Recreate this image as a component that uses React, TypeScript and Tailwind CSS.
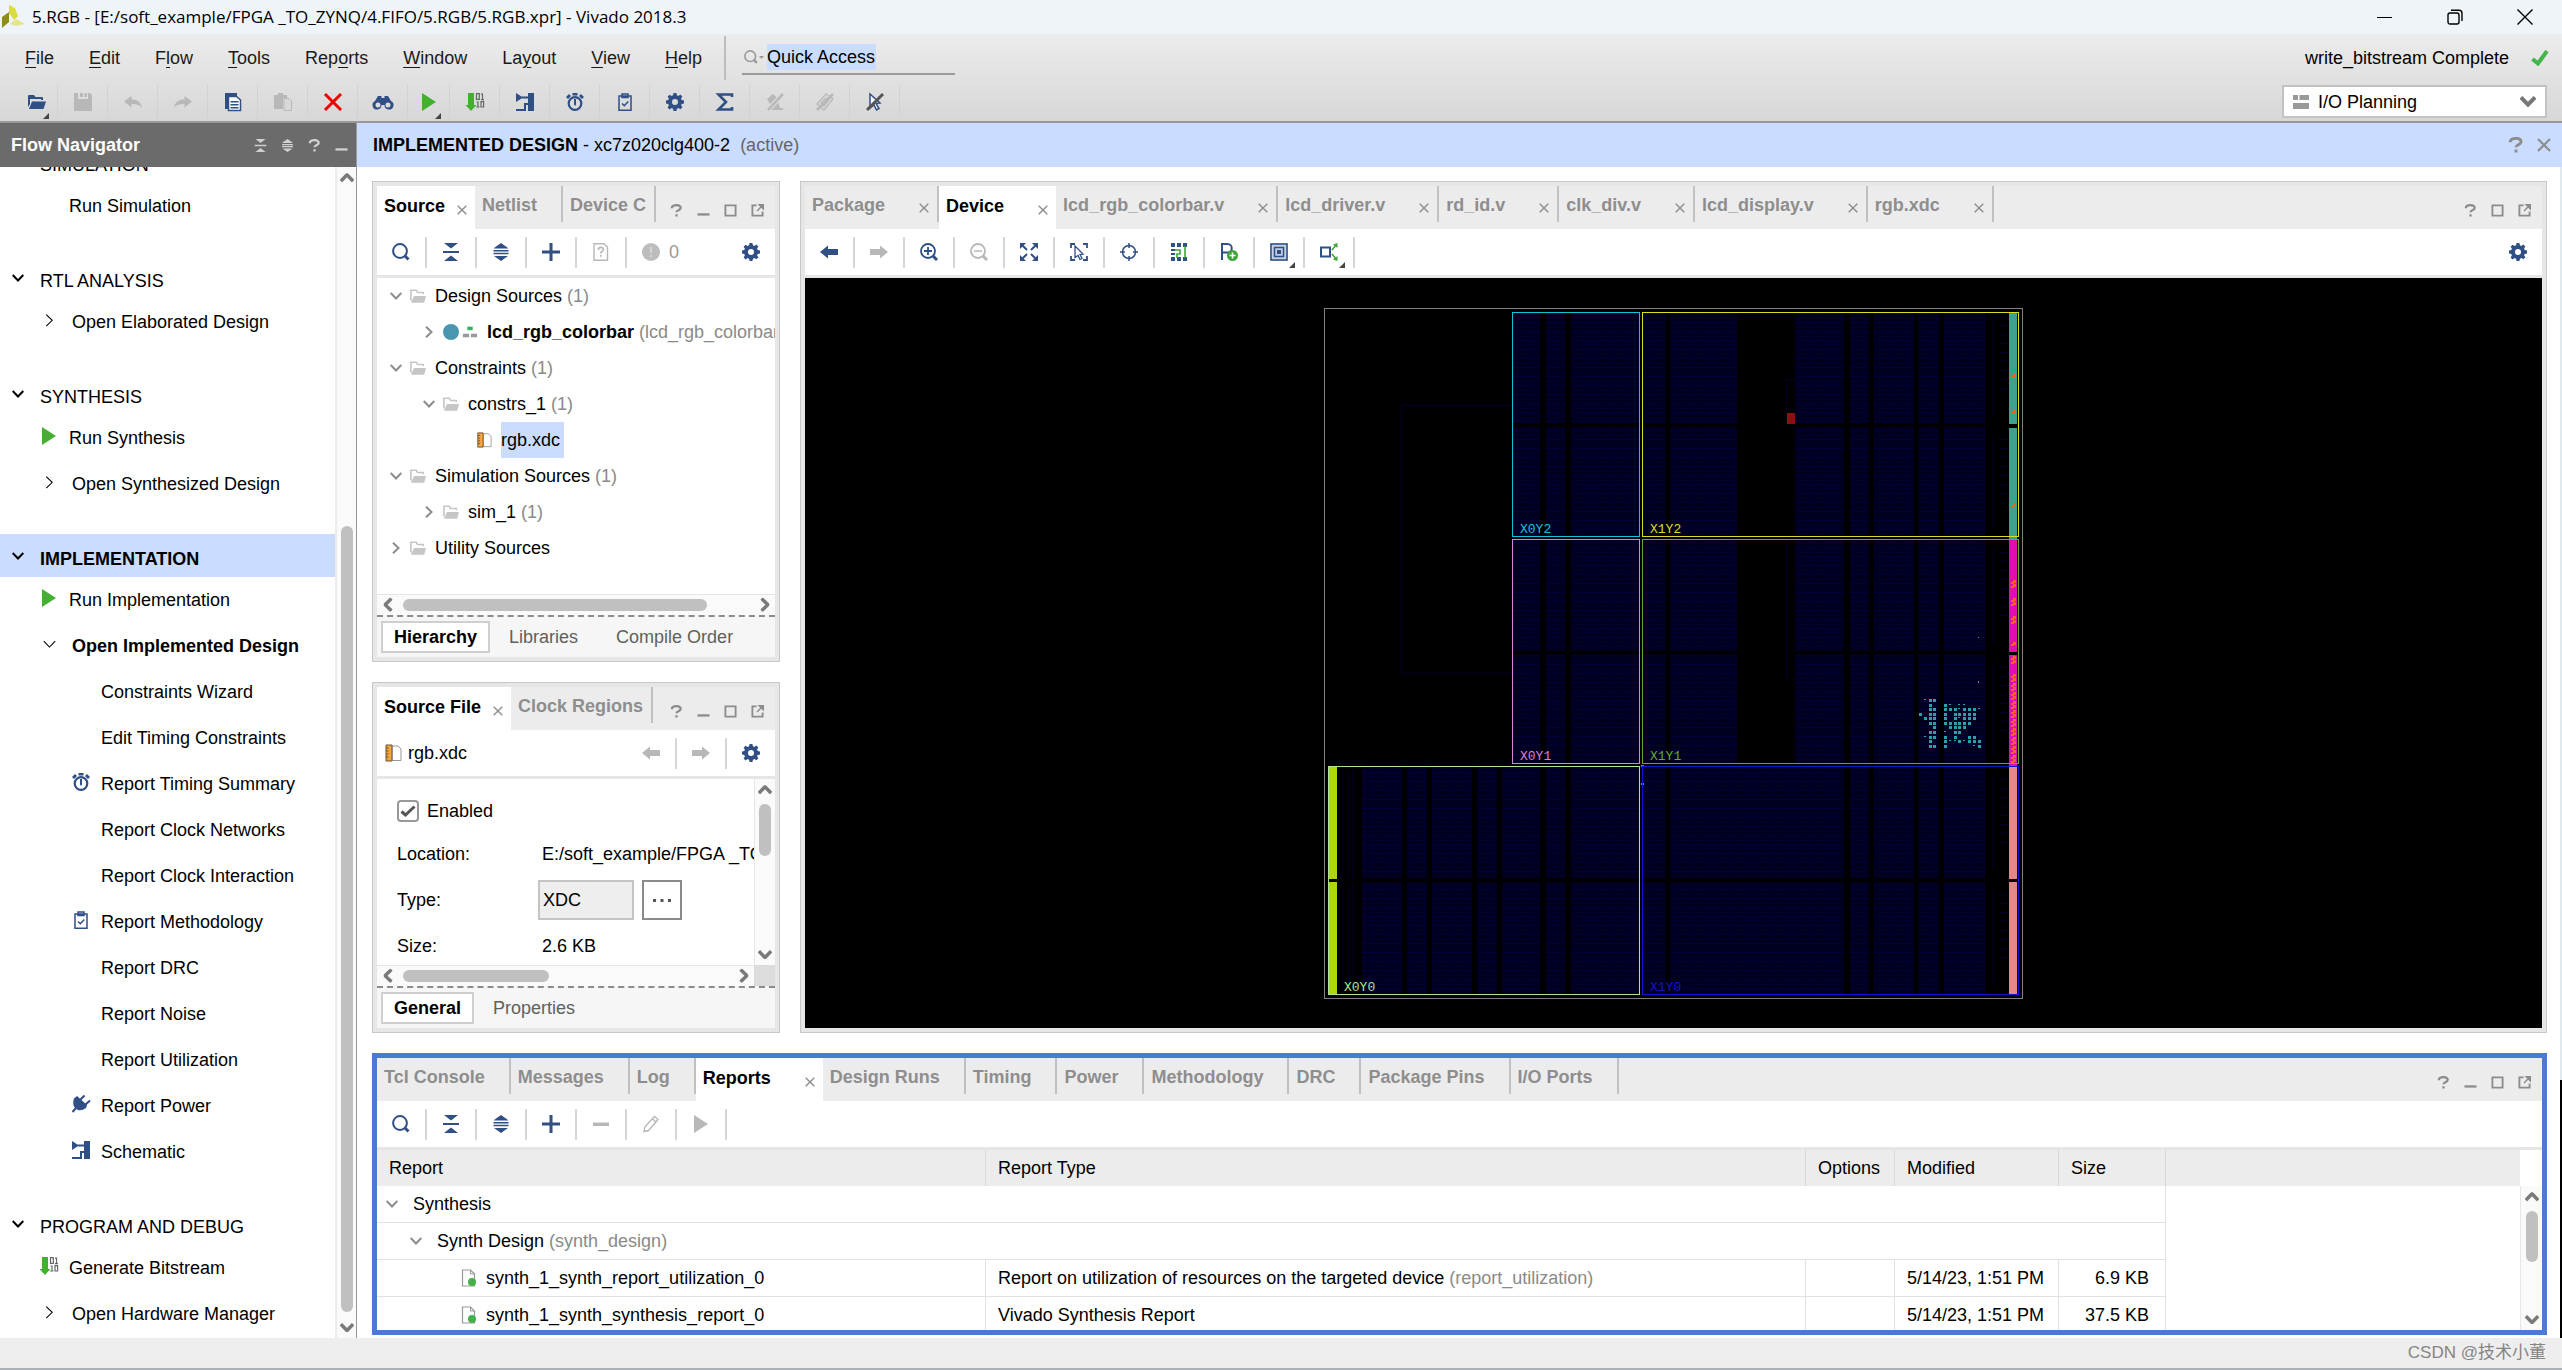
import type { ReactNode } from "react";
import { clsx } from "clsx";

type IconName =
  | "open" | "save" | "undo" | "redo" | "copy" | "paste" | "delete" | "find" | "play" | "bits"
  | "schematic" | "timer" | "clipboard" | "gear" | "sigma" | "markOff" | "chipOff" | "cursorOff"
  | "search" | "collapse" | "expand" | "plus" | "minus" | "docHelp" | "alert" | "left" | "right"
  | "zoomIn" | "zoomOut" | "fit" | "selectArea" | "target" | "routing" | "pin" | "cell" | "nets"
  | "pencil" | "plug" | "folder" | "xdc" | "report" | "hierarchy" | "module";

const GEAR =
  "M7.6 0h2.8l.5 2.3 1.4.6 2-1.3 2 2-1.2 2 .6 1.4 2.3.6v2.8l-2.3.5-.6 1.4 1.3 2-2 2-2-1.2-1.4.6-.6 2.3H7.6L7 15.700l-1.400-.6-2 1.300-2-2 1.300-2-.6-1.400L0 10.400V7.600l2.300-.5.6-1.400-1.300-2 2-2 2 1.300L7 2.300zM9 6a3 3 0 1 0 0 6 3 3 0 0 0 0-6z";

const ICONS: Record<IconName, ReactNode> = {
  open: (
    <>
      <path d="M0 14V3q0-1 1-1h5l1.500 2H14q1 0 1 1v2h-2V6H2v5z" />
      <path d="M4 8.500h14L15.500 16H1z" />
    </>
  ),
  save: <path fillRule="evenodd" d="M0 0h4v6h10V0h2l2 2v16H0zM6 0h3v4H6zM10.500 0H13v4h-2.500z" />,
  undo: <path d="M0 8.500 7.500 3v3.500C13 6.500 17.500 9 18 15c-2-3-5-4-10.500-4v3.500z" />,
  redo: <path d="M18 8.500 10.500 3v3.500C5 6.500.5 9 0 15c2-3 5-4 10.500-4v3.500z" />,
  copy: (
    <>
      <path d="M1 0h12v3H4v13H1z" />
      <path d="M4.500 3.500h8l4 3.500v10.500h-12z" fill="#fff" stroke="currentColor" strokeWidth="1.500" />
      <path d="M6.500 8h8v1.500h-8zM6.500 11h8v1.500h-8zM6.500 14h8v1.500h-8z" />
    </>
  ),
  paste: (
    <>
      <path d="M0 2h4V0h5v2h4v3H9v11H0z" />
      <path d="M10 5.500h5L17.500 8v9.500H10z" fill="#d9d9d9" stroke="currentColor" />
    </>
  ),
  delete: <path d="M1 1l16 16M17 1 1 17" stroke="currentColor" strokeWidth="3" fill="none" />,
  find: (
    <path
      fillRule="evenodd"
      d="M4 3h3.500v2h3V3H14l3 5a4.500 4.500 0 1 1-6.500 4h-3A4.500 4.500 0 1 1 1 8zM4 9.500a2.500 2.500 0 1 0 0 5 2.500 2.500 0 0 0 0-5zm10 0a2.500 2.500 0 1 0 0 5 2.500 2.500 0 0 0 0-5z"
    />
  ),
  play: <path d="M2 0l14 9L2 18z" />,
  bits: (
    <>
      <path d="M2 0h6v12h2.500L5 18-.5 12H2z" fill="#43b02f" />
      <path
        d="M10.500.7h2.800v5.600h-2.800zM15 1.200h1.500v5.600M15 6.600h3M10.500 9h1.500v5.500M10.200 14h3.200M15 8.700h2.600v5.300H15z"
        fill="none"
        stroke="#666"
        strokeWidth="1.200"
      />
    </>
  ),
  schematic: (
    <>
      <path d="M0 0l7 4.500L0 9zM12 0h6v18h-6z" />
      <path d="M6 4.500h7M13 11H9v6H0" fill="none" stroke="currentColor" strokeWidth="2" />
    </>
  ),
  timer: (
    <>
      <circle cx="9" cy="10.500" r="6.300" fill="none" stroke="currentColor" strokeWidth="2.200" />
      <path d="M6.500 0h5v2.500h-5zM0 4l3-3 2 2-3 3zM18 4l-3-3-2 2 3 3zM8 6h2v5.500l-1 1.500-1-1.500z" />
    </>
  ),
  clipboard: (
    <path
      d="M3 3h12v14.200H3zM6 1h6v3.500H6zM6 10.500l2.300 2.200 4-4.200"
      fill="none"
      stroke="currentColor"
      strokeWidth="1.500"
    />
  ),
  gear: <path fillRule="evenodd" d={GEAR} />,
  sigma: (
    <path
      d="M16 4V1.500H2.500L10 9l-7.500 7.500H16V14"
      fill="none"
      stroke="currentColor"
      strokeWidth="2.600"
    />
  ),
  markOff: (
    <>
      <path d="M1 6l6-5 5 5-5 6-3-1zM12 9l2 6h3v2H2v-2z" />
      <path d="M17 1 2 17" stroke="#d9d9d9" strokeWidth="5" />
      <path d="M17 1 2 17" stroke="currentColor" strokeWidth="2.500" />
    </>
  ),
  chipOff: (
    <>
      <path d="M1 11 10 1l7 5-9 11zM5 10l5-5 3 2-5 6z" fill="none" stroke="currentColor" strokeWidth="1.300" />
      <path d="M17 1 1 17" stroke="currentColor" strokeWidth="2.600" />
    </>
  ),
  cursorOff: (
    <>
      <path d="M4 1l10 9-4 .5 3 5-2.500 1.500L8 12l-4 3z" fill="#fff" stroke="#2f4f85" strokeWidth="1.500" />
      <path d="M17 1 1 17" stroke="#555" strokeWidth="3" />
    </>
  ),
  search: (
    <>
      <circle cx="8" cy="8" r="6.900" fill="none" stroke="currentColor" strokeWidth="2" />
      <path d="M12.500 12.500l4 4" stroke="currentColor" strokeWidth="3" />
    </>
  ),
  collapse: <path d="M2 0h14L9 5.500zM1 8h16v2H1zM9 12.500 16 18H2z" />,
  expand: <path d="M9 0l7 5v.500H2V5zM1.500 7h15v1.500h-15zM1.500 9.800h15v1.500h-15zM2 13h14L9 18z" />,
  plus: <path d="M7.500 0h3v7.500H18v3h-7.500V18h-3v-7.500H0v-3h7.500z" />,
  minus: <path d="M1 7.500h16v3.500H1z" />,
  docHelp: (
    <>
      <path d="M2 .7h10L15.500 4v13.300H2z" fill="none" stroke="currentColor" strokeWidth="1.400" />
      <path d="M6.300 7c0-3.500 5-3.300 5-.5 0 2-2.500 2-2.500 4M8.800 12v1.800" fill="none" stroke="currentColor" strokeWidth="1.700" />
    </>
  ),
  alert: (
    <>
      <circle cx="9" cy="9" r="9" />
      <path d="M9 4v6M9 12v2" stroke="#fff" strokeWidth="1.200" opacity=".6" />
    </>
  ),
  left: <path d="M0 9l8-6.500V6h10v6H8v3.500z" />,
  right: <path d="M18 9l-8-6.500V6H0v6h10v3.500z" />,
  zoomIn: (
    <>
      <circle cx="8" cy="8" r="7" fill="none" stroke="currentColor" strokeWidth="1.800" />
      <path d="M8 4v8M4 8h8" stroke="currentColor" strokeWidth="1.800" />
      <path d="M13 13l4 4" stroke="currentColor" strokeWidth="3" />
    </>
  ),
  zoomOut: (
    <>
      <circle cx="8" cy="8" r="7" fill="none" stroke="currentColor" strokeWidth="1.800" />
      <path d="M4 8h8" stroke="currentColor" strokeWidth="1.500" />
      <path d="M13 13l4 4" stroke="currentColor" strokeWidth="3" />
    </>
  ),
  fit: (
    <>
      <path d="M0 0h6L0 6zM18 0v6l-6-6zM0 18v-6l6 6zM18 18h-6l6-6z" />
      <path d="M2 2l5 5M16 2l-5 5M2 16l5-5M16 16l-5-5" stroke="currentColor" strokeWidth="2" />
    </>
  ),
  selectArea: (
    <>
      <path d="M1 5V1h4M13 1h4v4M17 13v4h-4M5 17H1v-4" fill="none" stroke="currentColor" strokeWidth="1.800" />
      <path d="M5 3l8 8-3 .5 2 4-2 1-2-4-3 2z" fill="#fff" stroke="currentColor" strokeWidth="1.300" />
    </>
  ),
  target: (
    <>
      <circle cx="9" cy="9" r="6.500" fill="none" stroke="currentColor" strokeWidth="1.500" />
      <path d="M9 0v5M9 13v5M0 9h5M13 9h5" stroke="currentColor" strokeWidth="1.500" />
    </>
  ),
  routing: (
    <>
      <path d="M1 0h4v4H1zM7 0h4v4H7zM13 0h4v4h-4zM1 14h4v4H1zM7 14h4v4H7zM13 14h4v4h-4zM1 6h4v2H1zM1 10h4v2H1z" />
      <path d="M5 7h5v4H7v4M15 3v12" fill="none" stroke="#3da63a" strokeWidth="1.600" />
    </>
  ),
  pin: (
    <>
      <path d="M2 17V1h5.500a4 4 0 0 1 0 8.500H2" fill="none" stroke="currentColor" strokeWidth="2" />
      <circle cx="12.500" cy="12.500" r="5.500" fill="#3da63a" />
      <path d="M12.500 9.500v6M9.500 12.500h6" stroke="#fff" strokeWidth="1.500" />
    </>
  ),
  cell: (
    <>
      <path d="M0 0h18v18H0z" fill="#c5cfe3" />
      <path d="M1 1h16v16H1zM4.500 4.500h9v9h-9z" fill="none" stroke="currentColor" strokeWidth="1.500" />
      <path d="M7 7h4v4H7z" />
    </>
  ),
  nets: (
    <>
      <path d="M1 4.500h9v9H1z" fill="none" stroke="currentColor" strokeWidth="2" />
      <path d="M12 7l4-5M12 11l4 5" stroke="#3da63a" strokeWidth="1.600" />
      <path d="M17.500 0v5L13 1.500zM17.500 18v-5L13 16.500z" fill="#3da63a" />
    </>
  ),
  pencil: (
    <path
      d="M2 16.500l.800-4.500L12.500 1.500l3.500 3L6.500 15.500zM10.500 4l3.500 3"
      fill="none"
      stroke="currentColor"
      strokeWidth="1.400"
    />
  ),
  plug: (
    <>
      <path d="M2 3.500 5 1l10 9-1 3q-4 3-8 2l-3-2Q0 9 2 3.500z" />
      <path d="M8 5l4.500-4.500M13 10l5-4.500M4 13l-3.500 4" stroke="currentColor" strokeWidth="2" />
    </>
  ),
  folder: (
    <>
      <path d="M1 14V2.500h6L8.500 5H15v2" fill="none" stroke="#c6c6c6" strokeWidth="1.800" />
      <path d="M4.500 9H18l-2 7.500H1z" fill="#c6c6c6" />
    </>
  ),
  xdc: (
    <>
      <path d="M8 2h6l3 3v11.500H8z" fill="#fff" stroke="#999" />
      <path d="M2 1h6v16H2z" fill="#f5a33b" stroke="#6b5330" />
      <path d="M2 4h2.500M2 7h2.500M2 10h2.500M2 13h2.500" stroke="#6b5330" />
    </>
  ),
  report: (
    <>
      <path d="M2.500 1h8l4 4v12h-12z" fill="#fff" stroke="#999" strokeWidth="1.200" />
      <path d="M10.500 1v4h4" fill="none" stroke="#999" />
      <circle cx="12" cy="13" r="4" fill="#45b04a" />
    </>
  ),
  hierarchy: (
    <>
      <path d="M6 3h6v4H6z" fill="#2fb457" />
      <path d="M1 11h7v4H1zM10 11h7v4h-7z" fill="#999" />
    </>
  ),
  module: <circle cx="9" cy="9" r="9" fill="#4a96b0" />,
};

function Icon({ name, className = "size-[18px]" }: { name: IconName; className?: string }) {
  return (
    <svg viewBox="0 0 18 18" fill="currentColor" className={clsx("shrink-0 overflow-visible", className)} aria-hidden>
      {ICONS[name]}
    </svg>
  );
}

const ROTATION = {
  down: "",
  up: "rotate-180",
  left: "rotate-90",
  right: "-rotate-90",
};

function Chevron({
  dir,
  stroke = 2,
  className = "w-3 text-[#8c8c8c]",
}: {
  dir: keyof typeof ROTATION;
  stroke?: number;
  className?: string;
}) {
  return (
    <svg viewBox="0 0 12 8" className={clsx("shrink-0", ROTATION[dir], className)} aria-hidden>
      <path d="M.7 1 6 6.500 11.300 1" fill="none" stroke="currentColor" strokeWidth={stroke} />
    </svg>
  );
}

function ScrollArrow({ dir }: { dir: keyof typeof ROTATION }) {
  return (
    <button className="flex size-[21px] shrink-0 items-center justify-center" aria-label={`Scroll ${dir}`}>
      <Chevron dir={dir} stroke={3} className="w-[14px] text-[#7a7a7a]" />
    </button>
  );
}

function DropMark() {
  return (
    <svg viewBox="0 0 6 6" className="absolute right-[8px] bottom-0 size-[6px]" aria-hidden>
      <path d="M6 0v6H0z" fill="#444" />
    </svg>
  );
}

const GLYPHS = {
  help: (
    <path d="M2 4.500C2 .2 11.500.2 11.500 4c0 3-4.500 2.500-4.500 5M7 11v2.500" fill="none" stroke="currentColor" strokeWidth="2.500" />
  ),
  min: <path d="M.5 10h13v2.500H.5z" fill="currentColor" />,
  max: <path d="M1.500 1.500h11v11h-11z" fill="none" stroke="currentColor" strokeWidth="2" />,
  float: (
    <>
      <path d="M6 1.500H1.500v11h11V8" fill="none" stroke="currentColor" strokeWidth="2" />
      <path d="M8 0h6v6zM6.500 7.500 12 2" fill="currentColor" stroke="currentColor" strokeWidth="1.500" />
    </>
  ),
  close: <path d="M1 1l12 12M13 1 1 13" stroke="currentColor" strokeWidth="2" />,
};

function Glyph({ name, className = "size-[13px]" }: { name: keyof typeof GLYPHS; className?: string }) {
  return (
    <button aria-label={name}>
      <svg viewBox="0 0 14 14" className={clsx("block", className)}>
        {GLYPHS[name]}
      </svg>
    </button>
  );
}

function TitleBar() {
  return (
    <header className="flex h-[34px] shrink-0 items-center bg-[#eff4f9] pl-[2px] text-black">
      <svg viewBox="0 0 24 24" className="size-[24px]" aria-hidden>
        <path d="M7 0l6 3 3 8-4 4-5-7z" fill="#d9dc3c" />
        <path d="M0 12l7-5v10L0 23z" fill="#8e8f12" />
        <path d="M8 19l6-5 9 5-9 2z" fill="#e4e58a" />
      </svg>
      <h1 className="ml-[6px] flex-1 font-['Open_Sans',sans-serif] text-[17px] leading-6">
        5.RGB - [E:/soft_example/FPGA _TO_ZYNQ/4.FIFO/5.RGB/5.RGB.xpr] - Vivado 2018.3
      </h1>
      <div className="flex pr-[2px]">
        <button className="flex w-[70px] justify-center" aria-label="Minimize">
          <svg viewBox="0 0 16 16" className="size-4"><path d="M0 8.500h15" stroke="#000" /></svg>
        </button>
        <button className="flex w-[70px] justify-center" aria-label="Restore">
          <svg viewBox="0 0 16 16" className="size-4" fill="none" stroke="#000" strokeWidth="1.400">
            <rect x="1" y="4" width="11" height="11" rx="2" />
            <path d="M4 1.200h8q3 0 3 3V12" />
          </svg>
        </button>
        <button className="flex w-[70px] justify-center" aria-label="Close">
          <svg viewBox="0 0 16 16" className="size-4"><path d="M.5.5l15 15M15.500.5l-15 15" stroke="#000" strokeWidth="1.400" /></svg>
        </button>
      </div>
    </header>
  );
}

// label and the index of its mnemonic letter
const MENUS: [string, number][] = [
  ["File", 0], ["Edit", 0], ["Flow", 1], ["Tools", 0], ["Reports", 3],
  ["Window", 0], ["Layout", 2], ["View", 0], ["Help", 0],
];

const TOOLBAR: { icon: IconName; tone?: string; menu?: boolean; narrow?: boolean }[] = [
  { icon: "open", menu: true, narrow: true },
  { icon: "save", tone: "text-[#b8b8b8]" },
  { icon: "undo", tone: "text-[#b8b8b8]" },
  { icon: "redo", tone: "text-[#b8b8b8]" },
  { icon: "copy" },
  { icon: "paste", tone: "text-[#b8b8b8]" },
  { icon: "delete", tone: "text-[#ee0000]" },
  { icon: "find" },
  { icon: "play", tone: "text-[#43b02f]", menu: true, narrow: true },
  { icon: "bits" },
  { icon: "schematic" },
  { icon: "timer" },
  { icon: "clipboard" },
  { icon: "gear" },
  { icon: "sigma" },
  { icon: "markOff", tone: "text-[#b8b8b8]" },
  { icon: "chipOff", tone: "text-[#b8b8b8]" },
  { icon: "cursorOff" },
];

function MainBar() {
  return (
    <div className="flex h-[89px] shrink-0 justify-between border-b-2 border-[#999] bg-gradient-to-b from-[#ececec] to-[#d7d7d7]">
      <div>
        <div className="flex h-[51px] items-start pt-[2px]">
          <nav className="flex h-11 items-center gap-[35px] pl-[25px] text-[#1a1a1a]">
            {MENUS.map(([label, at]) => (
              <button key={label}>
                {label.slice(0, at)}
                <span className="underline underline-offset-3">{label[at]}</span>
                {label.slice(at + 1)}
              </button>
            ))}
          </nav>
          <div className="ml-[22px] h-11 w-[2px] bg-[#bdbdbd]" />
          <label className="mt-[5px] ml-4 flex h-[34px] w-[213px] items-center border-b-2 border-[#9a9a9a]">
            <span className="flex w-[25px] items-center text-[#999]">
              <Icon name="search" className="ml-[2px] size-[14px]" />
              <svg viewBox="0 0 5 3" className="ml-px w-[5px]"><path d="M0 0h5L2.500 3z" fill="#999" /></svg>
            </span>
            <input
              aria-label="Quick Access"
              defaultValue="Quick Access"
              className="h-[26px] w-[109px] bg-[#cadcff] outline-none"
            />
          </label>
        </div>
        <div className="flex h-[34px] pl-4">
          {TOOLBAR.map((t) => (
            <button
              key={t.icon}
              aria-label={t.icon}
              className={clsx(
                "relative flex items-center justify-center border-r border-[#d2d2d2]",
                t.narrow ? "w-[42px]" : "w-[50px]",
                t.tone ?? "text-[#2f4f85]",
              )}
            >
              <Icon name={t.icon} />
              {t.menu && <DropMark />}
            </button>
          ))}
        </div>
      </div>
      <div className="pr-[15px]">
        <div className="flex h-[51px] items-center justify-end gap-[22px] pb-1">
          <span>write_bitstream Complete</span>
          <svg viewBox="0 0 18 16" className="-mr-[2px] w-[18px]" aria-hidden>
            <path d="M1.500 9l5.500 4.500L16 1" fill="none" stroke="#43b54a" strokeWidth="4" />
          </svg>
        </div>
        <div className="relative flex items-center">
          <svg viewBox="0 0 16 14" className="absolute left-[11px] w-4" fill="#999" aria-hidden>
            <path d="M0 0h5v5H0zM6.500 0H16v5H6.500zM0 8h16v6H0z" />
          </svg>
          <select
            aria-label="Layout"
            className="h-[33px] w-[265px] appearance-none border-2 border-[#c2c2c2] bg-white pl-[34px] outline-none"
          >
            <option>I/O Planning</option>
          </select>
          <span className="pointer-events-none absolute right-[11px]">
            <Chevron dir="down" stroke={3} className="w-4 text-[#777]" />
          </span>
        </div>
      </div>
    </div>
  );
}

type FlowItem = { label: string; icon?: IconName; tone?: string; arrow?: "right" | "down"; sub?: boolean };

const FLOW: { title: string; active?: boolean; items: FlowItem[] }[] = [
  { title: "SIMULATION", items: [{ label: "Run Simulation" }] },
  { title: "RTL ANALYSIS", items: [{ label: "Open Elaborated Design", arrow: "right" }] },
  {
    title: "SYNTHESIS",
    items: [
      { label: "Run Synthesis", icon: "play", tone: "text-[#43b02f]" },
      { label: "Open Synthesized Design", arrow: "right" },
    ],
  },
  {
    title: "IMPLEMENTATION",
    active: true,
    items: [
      { label: "Run Implementation", icon: "play", tone: "text-[#43b02f]" },
      { label: "Open Implemented Design", arrow: "down" },
      { label: "Constraints Wizard", sub: true },
      { label: "Edit Timing Constraints", sub: true },
      { label: "Report Timing Summary", icon: "timer", sub: true },
      { label: "Report Clock Networks", sub: true },
      { label: "Report Clock Interaction", sub: true },
      { label: "Report Methodology", icon: "clipboard", sub: true },
      { label: "Report DRC", sub: true },
      { label: "Report Noise", sub: true },
      { label: "Report Utilization", sub: true },
      { label: "Report Power", icon: "plug", sub: true },
      { label: "Schematic", icon: "schematic", sub: true },
    ],
  },
  {
    title: "PROGRAM AND DEBUG",
    items: [
      { label: "Generate Bitstream", icon: "bits" },
      { label: "Open Hardware Manager", arrow: "right" },
    ],
  },
];

function FlowRow({ item }: { item: FlowItem }) {
  return (
    <button
      className={clsx(
        "flex h-[46px] w-full items-center text-left",
        item.sub ? "pl-[72px]" : "pl-10",
        item.arrow === "down" && "font-bold",
      )}
    >
      <span className={clsx("flex justify-center pb-1", item.arrow ? "w-[19px]" : "w-[17px]", item.tone ?? "text-[#2f4f85]")}>
        {item.icon && <Icon name={item.icon} />}
        {item.arrow && <Chevron dir={item.arrow} stroke={1} className="w-[13px] text-black" />}
      </span>
      <span className={item.arrow ? "ml-[13px]" : "ml-[12px]"}>{item.label}</span>
    </button>
  );
}

function FlowNavigator() {
  return (
    <aside className="flex w-[357px] shrink-0 flex-col border-r border-[#999] bg-white">
      <div className="flex h-11 shrink-0 items-center bg-[#6b6b6b] pr-[8px] pl-[11px] text-white">
        <h2 className="flex-1 font-bold">Flow Navigator</h2>
        <div className="flex items-center gap-[14px] text-[#d0d0d0]">
          <Icon name="collapse" className="size-[13px]" />
          <Icon name="expand" className="size-[13px]" />
          <Glyph name="help" />
          <Glyph name="min" />
        </div>
      </div>
      <div className="flex min-h-0 flex-1">
        <nav className="min-w-0 flex-1 overflow-hidden">
          <div className="-mt-[27px] flex flex-col gap-[27px]">
            {FLOW.map((s) => (
              <section key={s.title}>
                <button
                  className={clsx(
                    "flex h-[43px] w-full items-center pt-[6px] pl-3 text-left",
                    s.active && "bg-[#cadcff] font-bold",
                  )}
                >
                  <span className="w-[28px] pb-[6px]">
                    <Chevron dir="down" className="w-3 text-black" />
                  </span>
                  {s.title}
                </button>
                {s.items.map((item) => (
                  <FlowRow key={item.label} item={item} />
                ))}
              </section>
            ))}
          </div>
        </nav>
        <div className="flex w-[21px] flex-col items-center border-l-2 border-[#ebebeb] bg-[#fafafa]">
          <ScrollArrow dir="up" />
          <div className="flex-[338]" />
          <div className="w-3 flex-[787] rounded-full bg-[#c0c0c0]" />
          <div className="flex-[5]" />
          <ScrollArrow dir="down" />
        </div>
      </div>
    </aside>
  );
}

type Tab = { label: string; active?: boolean; closable?: boolean; tight?: boolean };

function Panel({
  tabs,
  canMinimize = true,
  focused,
  className,
  children,
}: {
  tabs: Tab[];
  canMinimize?: boolean;
  focused?: boolean;
  className?: string;
  children: ReactNode;
}) {
  return (
    <section
      className={clsx(
        "flex min-h-0 min-w-0 flex-col",
        focused ? "border-[5px] border-[#4a7bd0]" : "border border-[#c8c8c8] bg-[#e6e6e6] p-1",
        className,
      )}
    >
      <div className="flex h-[43px] shrink-0 justify-between bg-[#ececec]">
        <div className="flex font-bold text-[#8e8e8e]" role="tablist">
          {tabs.map((t) => (
            <div
              key={t.label}
              className={clsx(
                "flex items-center pb-[3px] pl-[7px]",
                t.active ? "bg-white text-black" : "mb-[7px] h-9 border-r-2 border-[#c0c0c0] pt-1",
                t.closable || t.tight ? "pr-[8px]" : "pr-6",
              )}
            >
              <button role="tab" aria-selected={!!t.active} className="whitespace-nowrap">
                {t.label}
              </button>
              {t.closable && (
                <span className={clsx("pt-[5px] text-[#8e8e8e]", t.tight ? "pl-3" : "pl-[34px]")}>
                  <Glyph name="close" className="size-[10px]" />
                </span>
              )}
            </div>
          ))}
        </div>
        <div className="flex items-center gap-[14px] pt-[5px] pr-[11px] text-[#8c8c8c]">
          <Glyph name="help" />
          {canMinimize && <Glyph name="min" />}
          <Glyph name="max" />
          <Glyph name="float" />
        </div>
      </div>
      {children}
    </section>
  );
}

type Tool = { icon: IconName; off?: boolean; menu?: boolean };

function ToolButton({ icon, off, menu }: Tool) {
  return (
    <button
      aria-label={icon}
      className={clsx(
        "relative flex h-[31px] w-[50px] items-center justify-center border-r-2 border-[#d6d6d6]",
        off ? "text-[#b8b8b8]" : "text-[#2f4f85]",
      )}
    >
      <Icon name={icon} />
      {menu && <DropMark />}
    </button>
  );
}

function Gear() {
  return (
    <button className="flex w-12 justify-center text-[#2f4f85]" aria-label="Settings">
      <Icon name="gear" />
    </button>
  );
}

function Toolbar({ children }: { children: ReactNode }) {
  return (
    <div className="flex h-[49px] shrink-0 items-center border-b-3 border-[#e6e6e6] bg-white">{children}</div>
  );
}

function BottomTabs({ tabs }: { tabs: string[] }) {
  return (
    <div className="flex h-[42px] shrink-0 items-center border-t-2 border-dashed border-[#8c8c8c] bg-[#f6f6f6] pl-1" role="tablist">
      {tabs.map((t, i) => (
        <button
          key={t}
          role="tab"
          aria-selected={i === 0}
          className={clsx(
            "h-8",
            i === 0 ? "border-2 border-[#cfcfcf] bg-white px-[11px] font-bold" : "px-[19px] text-[#606060]",
          )}
        >
          {t}
        </button>
      ))}
    </div>
  );
}

type Node = { label: string; depth: number; arrow?: "right" | "down"; icons: IconName[]; note?: string; bold?: boolean; selected?: boolean };

const TREE: Node[] = [
  { label: "Design Sources", depth: 0, arrow: "down", icons: ["folder"], note: "(1)" },
  { label: "lcd_rgb_colorbar", depth: 1, arrow: "right", icons: ["module", "hierarchy"], note: "(lcd_rgb_colorbar.v)", bold: true },
  { label: "Constraints", depth: 0, arrow: "down", icons: ["folder"], note: "(1)" },
  { label: "constrs_1", depth: 1, arrow: "down", icons: ["folder"], note: "(1)" },
  { label: "rgb.xdc", depth: 2, icons: ["xdc"], selected: true },
  { label: "Simulation Sources", depth: 0, arrow: "down", icons: ["folder"], note: "(1)" },
  { label: "sim_1", depth: 1, arrow: "right", icons: ["folder"], note: "(1)" },
  { label: "Utility Sources", depth: 0, arrow: "right", icons: ["folder"] },
];

const INDENT = ["pl-[13px]", "pl-[46px]", "pl-[79px]"];

function SourcesPanel() {
  return (
    <Panel
      className="flex-[471_1_0%]"
      tabs={[
        { label: "Source", active: true, closable: true, tight: true },
        { label: "Netlist" },
        { label: "Device C", tight: true },
      ]}
    >
      <Toolbar>
        <ToolButton icon="search" />
        <ToolButton icon="collapse" />
        <ToolButton icon="expand" />
        <ToolButton icon="plus" />
        <ToolButton icon="docHelp" off />
        <span className="flex flex-1 items-center gap-[9px] pl-[15px] text-[#999]">
          <Icon name="alert" className="size-[18px] text-[#bdbdbd]" />0
        </span>
        <Gear />
      </Toolbar>
      <ul className="min-h-0 flex-1 overflow-hidden bg-white">
        {TREE.map((n) => (
          <li key={n.label} className={clsx("flex h-9 items-center whitespace-nowrap", INDENT[n.depth])}>
            <span className="w-5 shrink-0">{n.arrow && <Chevron dir={n.arrow} />}</span>
            <span className="flex gap-[3px] pr-[9px]">
              {n.icons.map((i) => (
                <Icon key={i} name={i} className="size-4" />
              ))}
            </span>
            <span className={clsx(n.bold && "font-bold", n.selected && "flex h-9 items-center bg-[#cadcff] pr-1")}>
              {n.label}
            </span>
            {n.note && <span className="pl-[5px] text-[#8a8a8a]">{n.note}</span>}
          </li>
        ))}
      </ul>
      <div className="flex h-[21px] shrink-0 items-center border-t border-[#e6e6e6] bg-[#fafafa]">
        <ScrollArrow dir="left" />
        <div className="flex flex-1 px-[5px]">
          <div className="h-3 w-[88%] rounded-full bg-[#c0c0c0]" />
        </div>
        <ScrollArrow dir="right" />
      </div>
      <BottomTabs tabs={["Hierarchy", "Libraries", "Compile Order"]} />
    </Panel>
  );
}

function SourceFilePanel() {
  return (
    <Panel
      className="flex-[341_1_0%]"
      tabs={[
        { label: "Source File", active: true, closable: true, tight: true },
        { label: "Clock Regions", tight: true },
      ]}
    >
      <Toolbar>
        <span className="flex flex-1 items-center gap-[6px] pl-[7px]">
          <Icon name="xdc" />
          rgb.xdc
        </span>
        <ToolButton icon="left" off />
        <ToolButton icon="right" off />
        <Gear />
      </Toolbar>
      <div className="flex min-h-0 flex-1 bg-white">
        <div className="min-w-0 flex-1 overflow-hidden pt-[9px] pl-5">
          <label className="flex h-[46px] items-center gap-2">
            <span className="relative flex size-[22px] items-center justify-center">
              <input
                type="checkbox"
                defaultChecked
                className="absolute inset-0 appearance-none rounded-sm border-2 border-[#999] bg-white"
              />
              <svg viewBox="0 0 16 12" className="relative w-4" aria-hidden>
                <path d="M1.500 6.500 5.500 10l9-8.500" fill="none" stroke="#555" strokeWidth="3" />
              </svg>
            </span>
            Enabled
          </label>
          <dl className="grid w-max grid-cols-[145px_auto] items-center pb-2 whitespace-nowrap">
            <dt className="h-10 leading-10">Location:</dt>
            <dd>E:/soft_example/FPGA _TO_ZYNQ/4.FIFO/5.RGB</dd>
            <dt className="h-[52px] leading-[52px]">
              <label htmlFor="file-type">Type:</label>
            </dt>
            <dd className="-ml-1 flex gap-2">
              <input
                id="file-type"
                readOnly
                value="XDC"
                className="h-10 w-[96px] border-2 border-[#c4c4c4] bg-[#eee] pl-[3px] outline-none"
              />
              <button className="flex size-10 items-center justify-center border-2 border-[#8a8a8a]" aria-label="Browse">
                <svg viewBox="0 0 18 3" className="w-[18px]" fill="#555">
                  <path d="M0 0h3v3H0zM7.500 0h3v3h-3zM15 0h3v3h-3z" />
                </svg>
              </button>
            </dd>
            <dt className="h-10 leading-10">Size:</dt>
            <dd>2.6 KB</dd>
          </dl>
        </div>
        <div className="flex w-[21px] flex-col items-center border-l border-[#e6e6e6] bg-[#fafafa]">
          <ScrollArrow dir="up" />
          <div className="mt-1 w-3 flex-[52] rounded-full bg-[#c0c0c0]" />
          <div className="flex-[88]" />
          <ScrollArrow dir="down" />
        </div>
      </div>
      <div className="flex h-[21px] shrink-0 bg-[#dcdcdc]">
        <div className="flex flex-1 items-center border-t border-[#e6e6e6] bg-[#fafafa]">
          <ScrollArrow dir="left" />
          <div className="flex flex-1 px-[5px]">
            <div className="h-3 w-[45%] rounded-full bg-[#c0c0c0]" />
          </div>
          <ScrollArrow dir="right" />
        </div>
        <div className="w-[21px]" />
      </div>
      <BottomTabs tabs={["General", "Properties"]} />
    </Panel>
  );
}

// x extents of the fabric columns in each clock region row
const LEFT_COLS = [[189, 216], [222, 241], [247, 315]];
const LEFT_BOTTOM_COLS = [[38, 78], [83, 103], [108, 148], [153, 173], [178, 216], [222, 241], [247, 315]];
const RIGHT_EDGE_COLS = [[526, 545], [550, 590], [595, 615], [620, 660]];
const RIGHT_COLS = [[319, 341], [346, 413], [471, 520], ...RIGHT_EDGE_COLS];
const RIGHT_BOTTOM_COLS = [[319, 341], [346, 520], ...RIGHT_EDGE_COLS];

const FABRIC = [
  { y: 5, h: 110, cols: [...LEFT_COLS, ...RIGHT_COLS] },
  { y: 119, h: 109, cols: [...LEFT_COLS, ...RIGHT_COLS] },
  { y: 232, h: 111, cols: [...LEFT_COLS, ...RIGHT_COLS] },
  { y: 347, h: 108, cols: [...LEFT_COLS, ...RIGHT_COLS] },
  { y: 459, h: 111, cols: [...LEFT_BOTTOM_COLS, ...RIGHT_BOTTOM_COLS] },
  { y: 574, h: 112, cols: [...LEFT_BOTTOM_COLS, ...RIGHT_BOTTOM_COLS] },
];

const REGIONS = [
  { name: "X0Y2", x: 188, y: 4, w: 127, h: 224, color: "#0fc3dc" },
  { name: "X1Y2", x: 318, y: 4, w: 376, h: 224, color: "#dcdc28" },
  { name: "X0Y1", x: 188, y: 231, w: 127, h: 224, color: "#d782dc" },
  { name: "X1Y1", x: 318, y: 231, w: 376, h: 224, color: "#64aa32" },
  { name: "X0Y0", x: 4, y: 458, w: 311, h: 228, color: "#aae696" },
  { name: "X1Y0", x: 318, y: 458, w: 376, h: 228, color: "#1414c8" },
];

const BANKS = [
  { x: 685, y: 5, h: 111, color: "#3fa08c" },
  { x: 685, y: 120, h: 111, color: "#3fa08c" },
  { x: 685, y: 231, h: 113, color: "#dc0faf" },
  { x: 685, y: 347, h: 111, color: "#dc0faf" },
  { x: 685, y: 459, h: 112, color: "#e68787" },
  { x: 685, y: 574, h: 112, color: "#e68787" },
  { x: 5, y: 459, h: 112, color: "#afd70f" },
  { x: 5, y: 574, h: 112, color: "#afd70f" },
];

const USED_PINS = [68, 104, 197, 274, 278, 292, 296, 310, 314, 336, 350, 354, 368, 372, 377, 381, 386, 390, 395, 399, 404, 408, 413, 417, 422, 426, 431, 435, 440, 444, 449, 453];

const CELL_X = [596, 601, 606, 610, 621, 626, 631, 635, 640, 645, 650, 655];
// # is a full slice, . is a nearly empty one
const CELLS: [number, string][] = [
  [391, " .##        "],
  [396, "  # #. ..   "],
  [400, "  #####.###."],
  [405, "# ### ##### "],
  [409, " #### #.### "],
  [414, "  ########  "],
  [418, "   # ####   "],
  [423, "  ##. ##    "],
  [428, " .### #  ## "],
  [432, "  # #..#.###"],
  [437, "  ###     .#"],
];

function Device() {
  return (
    <svg viewBox="0 0 699 691" className="h-[691px] w-[699px] shrink-0" shapeRendering="crispEdges">
      <defs>
        <pattern id="slices" width="5" height="9" patternUnits="userSpaceOnUse">
          <rect width="5" height="9" fill="#00001e" />
          <path d="M0 0h1v9H0zM0 1h5v1H0z" fill="#00002a" />
          <path d="M0 5h5v1H0z" fill="#00003a" />
        </pattern>
      </defs>
      <path d="M189 97H77v268h112M471 71h-9v34M462 232v138h9" fill="none" stroke="#00002c" />
      {FABRIC.map((row) =>
        row.cols.map(([a, b]) => (
          <rect key={`${row.y}-${a}`} x={a} y={row.y} width={b - a} height={row.h} fill="url(#slices)" />
        )),
      )}
      {FABRIC.map((row) => (
        <path
          key={row.y}
          d={`M660.500 ${row.y}v${row.h}M669.500 ${row.y + 8}v${row.h - 16}M675 ${row.y + 12}h9m-9 9h9m-9 9h9m-9 9h9m-9 9h9m-9 9h9m-9 9h9m-9 9h9`}
          fill="none"
          stroke="#000028"
        />
      ))}
      <path d="M24 463v108M29.500 459v112M24 578v104M29.500 574v112" stroke="#000028" />
      {BANKS.map((b) => (
        <rect key={`${b.x}-${b.y}`} x={b.x} y={b.y} width="8" height={b.h} fill={b.color} />
      ))}
      {USED_PINS.map((y) => (
        <path key={y} d={`M687 ${y}h3v2h-3zM689 ${y - 2}h3v3h-3z`} fill="#f0641e" />
      ))}
      <rect x="463" y="105" width="8" height="11" fill="#871212" />
      {CELLS.map(([y, row]) =>
        [...row].map((c, i) =>
          c === " " ? null : (
            <rect
              key={`${y}-${i}`}
              x={CELL_X[i] - 1}
              y={y}
              width={c === "#" ? 3 : 2}
              height={c === "#" ? 3 : 1}
              fill="#2aa0aa"
            />
          ),
        ),
      )}
      <path d="M654 329h1v1h-1zM654 373h1v2h-1zM317 457h3v2h-3zM317 475h3v2h-3z" fill="#2aa0aa" />
      <rect x="0.500" y="0.500" width="698" height="690" fill="none" stroke="#808080" />
      {REGIONS.map((r) => (
        <g key={r.name}>
          <rect x={r.x + 0.5} y={r.y + 0.5} width={r.w} height={r.h} fill="none" stroke={r.color} />
          <text
            x={r.x === 4 ? 20 : r.x + 8}
            y={r.y + r.h - 3}
            fill={r.color}
            className="font-['Liberation_Mono',monospace] text-[13px]"
          >
            {r.name}
          </text>
        </g>
      ))}
    </svg>
  );
}

const DEVICE_TOOLS: Tool[] = [
  { icon: "left" },
  { icon: "right", off: true },
  { icon: "zoomIn" },
  { icon: "zoomOut", off: true },
  { icon: "fit" },
  { icon: "selectArea" },
  { icon: "target" },
  { icon: "routing" },
  { icon: "pin" },
  { icon: "cell", menu: true },
  { icon: "nets", menu: true },
];

function DevicePanel() {
  const files = ["lcd_rgb_colorbar.v", "lcd_driver.v", "rd_id.v", "clk_div.v", "lcd_display.v", "rgb.xdc"];
  return (
    <Panel
      canMinimize={false}
      className="flex-1"
      tabs={[
        { label: "Package", closable: true },
        { label: "Device", active: true, closable: true },
        ...files.map((label) => ({ label, closable: true })),
      ]}
    >
      <Toolbar>
        <div className="flex flex-1">
          {DEVICE_TOOLS.map((t) => (
            <ToolButton key={t.icon} {...t} />
          ))}
        </div>
        <Gear />
      </Toolbar>
      <div className="flex min-h-0 flex-1 items-center justify-center overflow-hidden bg-black">
        <Device />
      </div>
    </Panel>
  );
}

const REPORT_TABS: Tab[] = [
  { label: "Tcl Console" }, { label: "Messages" }, { label: "Log" },
  { label: "Reports", active: true, closable: true },
  { label: "Design Runs" }, { label: "Timing" }, { label: "Power" }, { label: "Methodology" },
  { label: "DRC" }, { label: "Package Pins" }, { label: "I/O Ports" },
];

const REPORTS = [
  { name: "synth_1_synth_report_utilization_0", type: "Report on utilization of resources on the targeted device", cmd: "(report_utilization)", modified: "5/14/23, 1:51 PM", size: "6.9 KB" },
  { name: "synth_1_synth_synthesis_report_0", type: "Vivado Synthesis Report", cmd: "", modified: "5/14/23, 1:51 PM", size: "37.5 KB" },
];

function ReportsPanel() {
  const cell = "border-r border-b border-[#e2e2e2]";
  const head = "border-r border-[#dadada] pl-3 text-left font-normal";
  return (
    <Panel focused className="flex-[272_1_0%]" tabs={REPORT_TABS}>
      <Toolbar>
        <ToolButton icon="search" />
        <ToolButton icon="collapse" />
        <ToolButton icon="expand" />
        <ToolButton icon="plus" />
        <ToolButton icon="minus" off />
        <ToolButton icon="pencil" off />
        <ToolButton icon="play" off />
      </Toolbar>
      <div className="flex min-h-0 flex-1 bg-white">
        <div className="min-w-0 flex-1 overflow-hidden">
          <table className="w-full table-fixed border-separate border-spacing-0">
            <colgroup>
              <col className="w-[609px]" />
              <col className="w-[820px]" />
              <col className="w-[89px]" />
              <col className="w-[164px]" />
              <col className="w-[107px]" />
              <col />
            </colgroup>
            <thead>
              <tr className="h-9 bg-[#ececec]">
                <th className={head}>Report</th>
                <th className={head}>Report Type</th>
                <th className={head}>Options</th>
                <th className={head}>Modified</th>
                <th className={head}>Size</th>
                <th aria-label="empty" />
              </tr>
            </thead>
            <tbody>
              <tr className="h-[37px]">
                <td colSpan={5} className={cell}>
                  <span className="flex items-center gap-[15px] pl-[9px]">
                    <Chevron dir="down" /> Synthesis
                  </span>
                </td>
              </tr>
              <tr className="h-[37px]">
                <td colSpan={5} className={cell}>
                  <span className="flex items-center pl-[33px]">
                    <Chevron dir="down" />
                    <span className="pl-[15px]">
                      Synth Design <span className="text-[#8a8a8a]">(synth_design)</span>
                    </span>
                  </span>
                </td>
              </tr>
              {REPORTS.map((r) => (
                <tr key={r.name} className="h-[37px]">
                  <td className={cell}>
                    <span className="flex items-center gap-2 pl-[83px]">
                      <Icon name="report" /> {r.name}
                    </span>
                  </td>
                  <td className={clsx(cell, "pl-3")}>
                    {r.type} <span className="text-[#8a8a8a]">{r.cmd}</span>
                  </td>
                  <td className={cell} />
                  <td className={clsx(cell, "pl-3")}>{r.modified}</td>
                  <td className={clsx(cell, "pr-4 text-right")}>{r.size}</td>
                </tr>
              ))}
            </tbody>
          </table>
        </div>
        <div className="flex w-[22px] flex-col pt-9">
          <div className="flex flex-1 flex-col items-center border-l border-[#e6e6e6] bg-[#fafafa]">
            <ScrollArrow dir="up" />
            <div className="mt-1 w-3 flex-[50] rounded-full bg-[#c0c0c0]" />
            <div className="flex-[47]" />
            <ScrollArrow dir="down" />
          </div>
        </div>
      </div>
    </Panel>
  );
}

export default function App() {
  return (
    <div className="flex h-screen flex-col overflow-hidden bg-white font-['Liberation_Sans',Arial,sans-serif] text-[18px] leading-6 text-black">
      <TitleBar />
      <MainBar />
      <div className="flex min-h-0 flex-1">
        <FlowNavigator />
        <main className="flex min-w-0 flex-1 flex-col">
          <div className="flex h-11 shrink-0 items-center bg-[#cadcff] pr-[11px] pl-4">
            <p className="flex-1">
              <strong>IMPLEMENTED DESIGN</strong> - xc7z020clg400-2{" "}
              <span className="pl-[5px] text-[#666]">(active)</span>
            </p>
            <div className="flex items-center gap-[13px] text-[#8c8c8c]">
              <Glyph name="help" className="size-4" />
              <Glyph name="close" className="size-[14px]" />
            </div>
          </div>
          <div className="flex min-h-0 flex-1">
            <div className="flex min-w-0 flex-1 flex-col gap-5 pt-[14px] pr-[13px] pb-[3px] pl-[15px]">
              <div className="flex min-h-0 flex-[852_1_0%] gap-5">
                <div className="flex w-[408px] shrink-0 flex-col gap-5">
                  <SourcesPanel />
                  <SourceFilePanel />
                </div>
                <DevicePanel />
              </div>
              <ReportsPanel />
            </div>
            <div className="flex w-[2px] flex-col">
              <div className="flex-[913] bg-[#dfe9ee]" />
              <div className="flex-[258] bg-black" />
            </div>
          </div>
        </main>
      </div>
      <footer className="flex h-8 shrink-0 items-center justify-end border-b-2 border-[#abb2b7] bg-[#eee] pr-4 font-['Liberation_Sans','Noto_Sans_CJK_SC',sans-serif] text-[17px] text-[#858585]">
        CSDN @技术小董
      </footer>
    </div>
  );
}
